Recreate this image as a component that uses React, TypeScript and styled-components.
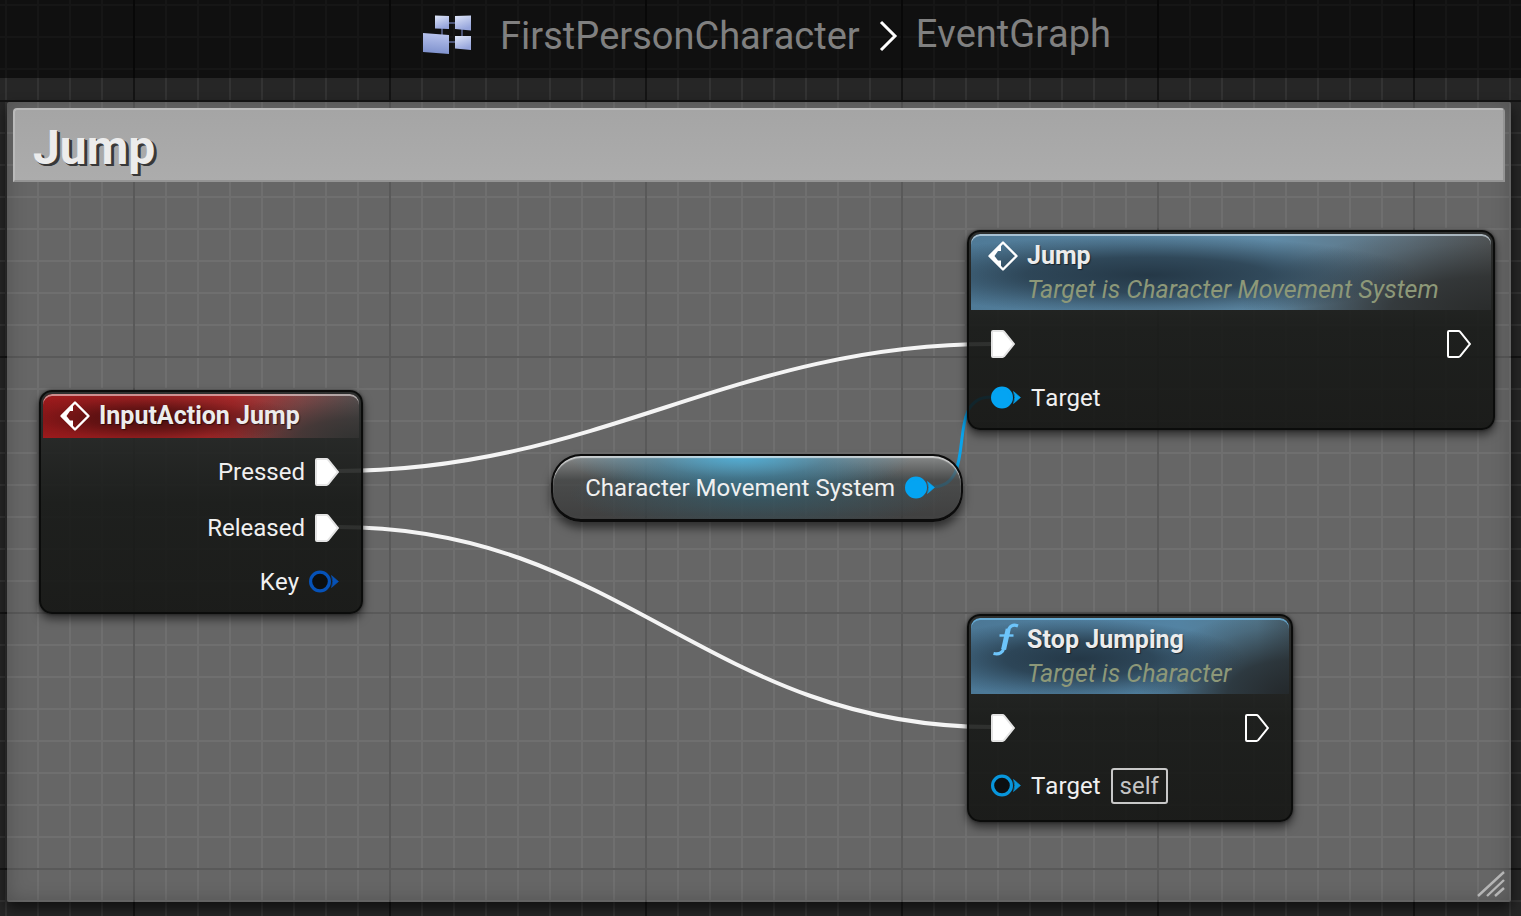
import React from "react";
import styled, { createGlobalStyle, css } from "styled-components";

const GlobalStyle = createGlobalStyle`
  *, *::before, *::after { box-sizing: border-box; }
  body {
    margin: 0;
    background: #262626;
    font-family: Roboto, "Liberation Sans", sans-serif;
    font-kerning: none;
  }
  svg { flex-shrink: 0; }
`;

/* Background grid: fine cells of 32px, strong lines each 256px */
const Page = styled.div`
  display: flex;
  flex-direction: column;
  min-height: 100vh;
  overflow: hidden;
  background-color: #262626;
  background-image:
    linear-gradient(to right, #141414 2px, transparent 2px),
    linear-gradient(to bottom, #141414 2px, transparent 2px),
    linear-gradient(to right, #333333 2px, transparent 2px),
    linear-gradient(to bottom, #333333 2px, transparent 2px);
  background-size: 256px 256px, 256px 256px, 32px 32px, 32px 32px;
  background-position: 133px 0, 0 100px, 5px 0, 0 4px;
`;

const TitleBar = styled.header`
  display: flex;
  justify-content: center;
  height: 78px;
  padding: 0 0 6px 12px;
  background: rgba(0, 0, 0, 0.56);
`;

const Breadcrumbs = styled.nav`
  display: flex;
  align-items: center;
`;

const Crumb = styled.button<{ $current?: boolean }>`
  border: 0;
  background: none;
  margin: 0;
  padding: ${(p) => (p.$current ? "0 0 4px" : "0")};
  color: #808080;
  font: 400 38px/44px Roboto, "Liberation Sans", sans-serif;
  font-kerning: none;
  cursor: pointer;
`;

const GraphIcon = styled.svg`
  width: 50px;
  height: 40px;
  margin: 0 28px 2px 0;
`;

const Chevron = styled.svg`
  width: 20px;
  height: 32px;
  margin: 0 18px;
`;

const Canvas = styled.main`
  position: relative;
  flex: 1;
  min-height: 838px;
`;

const CommentBox = styled.section`
  position: absolute;
  top: 24px;
  left: 7px;
  right: 10px;
  height: 800px;
  padding: 6px;
  border-radius: 2px;
  background: rgba(251, 251, 251, 0.3);
  box-shadow: inset 0 0 20px rgba(0, 0, 0, 0.22), 0 6px 14px rgba(0, 0, 0, 0.6);
`;

const CommentTitle = styled.h2`
  margin: 0;
  padding: 10px 18px 4px;
  border: 2px solid #bababa;
  border-right-color: #949494;
  border-bottom-color: #949494;
  border-radius: 4px 4px 0 0;
  background: linear-gradient(#a5a5a5, #acacac);
  color: #ececec;
  font-size: 48px;
  line-height: 56px;
  font-weight: 700;
  text-shadow: 1px 1px 0 #383838, 2px 2px 0 #383838, 3px 2px 0 #383838;
`;

const ResizeGrip = styled.svg`
  position: absolute;
  right: 6px;
  bottom: 5px;
  width: 28px;
  height: 26px;
`;

const Wires = styled.svg`
  position: absolute;
  top: 0;
  left: 0;
  width: 100%;
  height: 100%;
`;

const place = css<{ $x: number; $y: number; $w: number }>`
  position: absolute;
  left: ${(p) => p.$x}px;
  top: ${(p) => p.$y}px;
  width: ${(p) => p.$w}px;
`;

const NodeFrame = styled.article<{ $x: number; $y: number; $w: number }>`
  ${place}
  padding: 2px;
  border: 2px solid #0b0c0b;
  border-radius: 13px;
  background: linear-gradient(rgba(38, 40, 39, 0.88), rgba(20, 22, 20, 0.88) 50%, rgba(17, 18, 16, 0.88));
  box-shadow: 0 5px 10px rgba(0, 0, 0, 0.55), 0 0 3px rgba(0, 0, 0, 0.5);
`;

const tones = {
  event: css`
    background:
      radial-gradient(ellipse 48% 60% at 34% 56%, rgba(56, 10, 10, 0.85), rgba(60, 10, 10, 0.6) 40%, rgba(70, 12, 12, 0.2) 75%, transparent),
      radial-gradient(ellipse 48% 110% at 100% 100%, rgba(50, 50, 49, 1), rgba(50, 50, 49, 0.75) 40%, rgba(50, 50, 49, 0.2) 80%, transparent),
      linear-gradient(to right, #9c1a1c 0%, #a82a2b 60%, #844848 82%, #5a5252 100%);
    box-shadow: inset 0 2px 0 rgba(255, 255, 255, 0.5);
  `,
  call: css`
    background:
      radial-gradient(ellipse 52% 52% at 34% 54%, rgba(34, 52, 66, 0.95), rgba(34, 52, 66, 0.75) 45%, rgba(34, 52, 66, 0.25) 80%, transparent),
      radial-gradient(ellipse 48% 110% at 100% 100%, rgba(42, 44, 44, 1), rgba(42, 44, 44, 0.8) 40%, rgba(42, 44, 44, 0.2) 80%, transparent),
      linear-gradient(to right, #4f7a97 0%, #5f8aa6 58%, #60727e 84%, #55595b 100%);
    box-shadow: inset 0 2px 0 rgba(225, 240, 250, 0.6);
  `,
  pure: css`
    background:
      radial-gradient(ellipse 52% 52% at 34% 54%, rgba(34, 52, 66, 0.95), rgba(34, 52, 66, 0.75) 45%, rgba(34, 52, 66, 0.25) 80%, transparent),
      radial-gradient(ellipse 48% 110% at 100% 100%, rgba(36, 41, 44, 1), rgba(36, 41, 44, 0.8) 40%, rgba(36, 41, 44, 0.2) 80%, transparent),
      linear-gradient(to right, #4c7896 0%, #5383a3 65%, #54798f 90%, #48606e 100%);
    box-shadow: inset 0 2px 0 rgba(110, 185, 230, 0.75);
  `,
};

const NodeHeader = styled.header<{ $tone: keyof typeof tones }>`
  display: grid;
  grid-template-columns: 32px 1fr;
  column-gap: 8px;
  align-items: center;
  padding: 5px 16px;
  border-radius: 9px 9px 0 0;
  ${(p) => tones[p.$tone]}
`;

const NodeTitle = styled.h3`
  margin: 0;
  color: #ececec;
  font-size: 25px;
  line-height: 34px;
  font-weight: 700;
  white-space: nowrap;
  text-shadow: 1px 1px 1px rgba(0, 0, 0, 0.5);
`;

const NodeSubtitle = styled.p`
  grid-column: 2;
  margin: 0 0 -2px;
  color: #8d9878;
  font-size: 25px;
  line-height: 34px;
  font-style: italic;
  font-kerning: normal;
  white-space: nowrap;
`;

const NodeBody = styled.div`
  display: flex;
  flex-direction: column;
  padding: 6px 20px 2px;
`;

const PinRow = styled.div<{ $height: number; $align?: string }>`
  display: flex;
  align-items: center;
  justify-content: ${(p) => p.$align ?? "flex-start"};
  gap: 10px;
  height: ${(p) => p.$height}px;
  color: #f0f0f0;
  font-size: 24px;
  line-height: 32px;
  white-space: nowrap;
`;

const SelfValue = styled.span`
  height: 36px;
  padding: 0 7px;
  border: 2px solid #c8c8c8;
  border-radius: 3px;
  color: #c4c4c4;
`;

const Capsule = styled.article<{ $x: number; $y: number; $w: number }>`
  ${place}
  display: flex;
  align-items: center;
  justify-content: flex-end;
  gap: 10px;
  height: 68px;
  padding: 0 26px 0 32px;
  border: 2px solid #0c0c0c;
  border-bottom-width: 3px;
  border-radius: 30px;
  background:
    radial-gradient(ellipse 42% 70% at 46% 0%, rgba(78, 176, 218, 0.95), rgba(64, 145, 182, 0.5) 50%, transparent),
    radial-gradient(ellipse 46% 60% at 50% 60%, rgba(40, 104, 128, 0.5), transparent),
    linear-gradient(rgba(145, 148, 148, 0.78), rgba(66, 68, 68, 0.78) 38%, rgba(54, 54, 54, 0.8));
  box-shadow: inset 0 2px 1px rgba(255, 255, 255, 0.6), 0 6px 10px rgba(0, 0, 0, 0.55);
  color: #f0f0f0;
  font-size: 24px;
  line-height: 32px;
  white-space: nowrap;
`;

function ExecPin({ filled = false }: { filled?: boolean }) {
  return (
    <svg width="24" height="28" viewBox="0 0 24 28" aria-hidden="true">
      <path
        d="M2 1H11.500Q12.500 1 13.200 1.800L23 14L13.200 26.200Q12.500 27 11.500 27H2Q1 27 1 26V2Q1 1 2 1Z"
        fill={filled ? "#fff" : "none"}
        stroke={filled ? "#e4e4e4" : "#fff"}
        strokeWidth="2"
      />
    </svg>
  );
}

function DataPin({ color, filled = false }: { color: string; filled?: boolean }) {
  return (
    <svg width="30" height="24" viewBox="0 0 30 24" aria-hidden="true">
      <circle cx="11" cy="11.500" r="9.400" fill={filled ? color : "#0c0f11"} stroke={color} strokeWidth="3.200" />
      <path d="M22.500 5.500L29.500 11.500L22.500 17.500Q25 11.500 22.500 5.500Z" fill={color} stroke={color} strokeWidth="0.600" />
    </svg>
  );
}

function EventIcon() {
  return (
    <svg width="32" height="32" viewBox="0 0 32 32" aria-hidden="true">
      <path d="M16 2.500L29.500 16L16 29.500L2.500 16Z" fill="none" stroke="#fff" strokeWidth="2.400" strokeLinejoin="round" />
      <path d="M2 16L14 4V11H11L7.500 16L11 20.500H14V28Z" fill="#fff" />
    </svg>
  );
}

function FunctionIcon() {
  return (
    <svg width="32" height="34" viewBox="0 0 32 34" aria-hidden="true" fill="none" stroke="#6dc4fa">
      <path d="M31 3C26 1 22.300 3 21.200 8L17 24.500C16 29.500 12.500 32 6.500 30.500" strokeWidth="3.200" />
      <path d="M21.200 6L16.600 26.500" strokeWidth="5" />
      <path d="M12.500 12.500H26.500" strokeWidth="2.400" />
    </svg>
  );
}

export default function App() {
  return (
    <Page>
      <GlobalStyle />
      <TitleBar>
        <Breadcrumbs aria-label="Graph path">
          <GraphIcon viewBox="0 0 50 40" aria-hidden="true">
            <defs>
              <linearGradient id="tile" x1="0" y1="0" x2="0.4" y2="1">
                <stop offset="0" stopColor="#dfe6f8" />
                <stop offset="1" stopColor="#96a5dc" />
              </linearGradient>
              <linearGradient id="tileLarge" x1="0.5" y1="0" x2="0.4" y2="1">
                <stop offset="0" stopColor="#b9c4ee" />
                <stop offset="1" stopColor="#7d90cc" />
              </linearGradient>
            </defs>
            <path d="M20 8H40M20 27H40M20 8V27M40 8V27" stroke="#4b5374" strokeWidth="2" />
            <path d="M13 0.500L27 1V14L13 13.500Z" fill="url(#tile)" />
            <path d="M33 1L49 0.500V15.500L33 14Z" fill="url(#tile)" />
            <path d="M1 18L27 20V39L1 37Z" fill="url(#tileLarge)" />
            <path d="M33 21H49V35L33 33.500Z" fill="url(#tile)" />
          </GraphIcon>
          <Crumb type="button">FirstPersonCharacter</Crumb>
          <Chevron viewBox="0 0 20 32" aria-hidden="true">
            <path d="M3 2L17 16L3 30" fill="none" stroke="#fff" strokeWidth="3" />
          </Chevron>
          <Crumb type="button" $current aria-current="page">EventGraph</Crumb>
        </Breadcrumbs>
      </TitleBar>

      <Canvas>
        <CommentBox>
          <CommentTitle>Jump</CommentTitle>
          <ResizeGrip viewBox="0 0 28 26" aria-hidden="true">
            <path d="M1 25L27 1M10 25L27 9M18 25L27 17" stroke="#b5b5b5" strokeWidth="2.400" />
          </ResizeGrip>
        </CommentBox>

        <Wires aria-hidden="true" fill="none">
          <path d="M338 393C598 393 732 266 992 266" stroke="#f4f4f4" strokeWidth="4" />
          <path d="M338 449C622 449 708 649 992 649" stroke="#f4f4f4" strokeWidth="4" />
          <path d="M932 409C981 409 942 319 991 319" stroke="#0aa3ea" strokeWidth="3" />
        </Wires>

        <NodeFrame $x={39} $y={312} $w={324}>
          <NodeHeader $tone="event">
            <EventIcon />
            <NodeTitle>InputAction Jump</NodeTitle>
          </NodeHeader>
          <NodeBody>
            <PinRow $height={56} $align="flex-end">Pressed<ExecPin filled /></PinRow>
            <PinRow $height={56} $align="flex-end">Released<ExecPin filled /></PinRow>
            <PinRow $height={52} $align="flex-end">Key<DataPin color="#0652b8" /></PinRow>
          </NodeBody>
        </NodeFrame>

        <NodeFrame $x={967} $y={152} $w={528}>
          <NodeHeader $tone="call">
            <EventIcon />
            <NodeTitle>Jump</NodeTitle>
            <NodeSubtitle>Target is Character Movement System</NodeSubtitle>
          </NodeHeader>
          <NodeBody>
            <PinRow $height={56} $align="space-between"><ExecPin filled /><ExecPin /></PinRow>
            <PinRow $height={52}><DataPin color="#04a4f2" filled />Target</PinRow>
          </NodeBody>
        </NodeFrame>

        <Capsule $x={551} $y={376} $w={412}>
          Character Movement System
          <DataPin color="#04a4f2" filled />
        </Capsule>

        <NodeFrame $x={967} $y={536} $w={326}>
          <NodeHeader $tone="pure">
            <FunctionIcon />
            <NodeTitle>Stop Jumping</NodeTitle>
            <NodeSubtitle>Target is Character</NodeSubtitle>
          </NodeHeader>
          <NodeBody>
            <PinRow $height={56} $align="space-between"><ExecPin filled /><ExecPin /></PinRow>
            <PinRow $height={60}><DataPin color="#0896dc" />Target<SelfValue>self</SelfValue></PinRow>
          </NodeBody>
        </NodeFrame>
      </Canvas>
    </Page>
  );
}
